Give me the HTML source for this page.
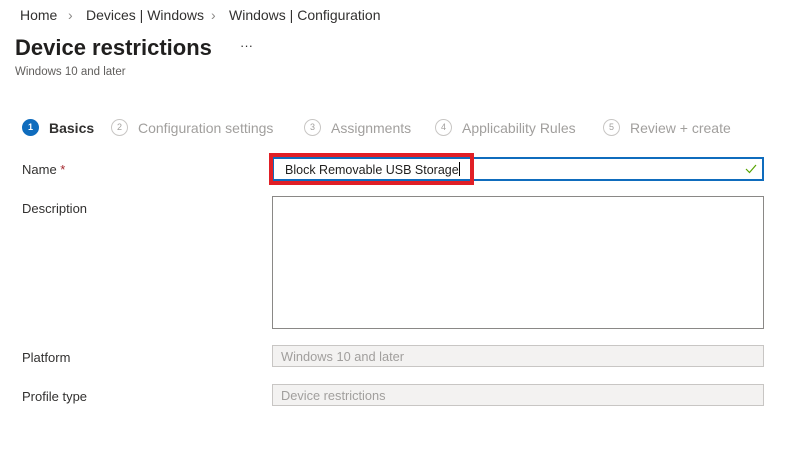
<!DOCTYPE html>
<html><head><meta charset="utf-8"><style>
body{margin:0;width:790px;height:475px;background:#fff;font-family:"Liberation Sans",sans-serif;color:#323130;position:relative;overflow:hidden}
.a{position:absolute;white-space:nowrap}
.bc{font-size:14px;top:7px}
.step{font-size:14px;top:120px;color:#a19f9d}
.c{position:absolute;top:119px;width:15px;height:15px;border:1px solid #c8c6c4;border-radius:50%;font-size:9px;line-height:15px;text-align:center;color:#a19f9d}
.lbl{font-size:13px;left:22px}
.box{position:absolute;left:272px;width:490px;border:1px solid #8a8886;background:#fff}
.dis{background:#f3f2f1;border-color:#c8c6c4;height:22px;font-size:12.8px;color:#a19f9d;line-height:22px;padding-left:8px;box-sizing:border-box;width:492px}
</style></head><body>
<div class="a bc" style="left:20px">Home</div>
<div class="a bc" style="left:68px;color:#8a8886">›</div>
<div class="a bc" style="left:86px">Devices | Windows</div>
<div class="a bc" style="left:211px;color:#8a8886">›</div>
<div class="a bc" style="left:229px">Windows | Configuration</div>
<div class="a" style="left:15px;top:35px;font-size:22px;font-weight:bold;color:#201f1e">Device restrictions</div>
<div class="a" style="left:240px;top:38px;font-size:13px">···</div>
<div class="a" style="left:15px;top:66px;font-size:11.5px;color:#605e5c">Windows 10 and later</div>
<div class="c" style="left:22px;background:#0f6cbd;border-color:#0f6cbd;color:#fff;font-weight:bold">1</div>
<div class="a step" style="left:49px;color:#323130;font-weight:bold">Basics</div>
<div class="c" style="left:111px">2</div>
<div class="a step" style="left:138px">Configuration settings</div>
<div class="c" style="left:304px">3</div>
<div class="a step" style="left:331px">Assignments</div>
<div class="c" style="left:435px">4</div>
<div class="a step" style="left:462px">Applicability Rules</div>
<div class="c" style="left:603px">5</div>
<div class="a step" style="left:630px">Review + create</div>
<div class="a lbl" style="top:162px">Name <span style="color:#a4262c">*</span></div>
<div class="box" style="top:157px;height:20px;border:2px solid #0f6cbd;width:488px"></div>
<div class="a" style="left:285px;top:162px;font-size:12.5px;color:#201f1e">Block Removable USB Storage<span style="display:inline-block;width:1px;height:14px;background:#000;vertical-align:-2px"></span></div>
<svg class="a" style="left:744px;top:163px" width="14" height="12"><path d="M2 6 L5.5 9.5 L12 2" stroke="#57a300" stroke-width="1.2" fill="none"/></svg>
<div class="a" style="left:269px;top:153px;width:197px;height:24px;border:4px solid #e01f26"></div>
<div class="a lbl" style="top:201px">Description</div>
<div class="box" style="top:196px;height:131px"></div>
<div class="a lbl" style="top:350px">Platform</div>
<div class="box dis" style="top:345px">Windows 10 and later</div>
<div class="a lbl" style="top:389px">Profile type</div>
<div class="box dis" style="top:384px">Device restrictions</div>
</body></html>
